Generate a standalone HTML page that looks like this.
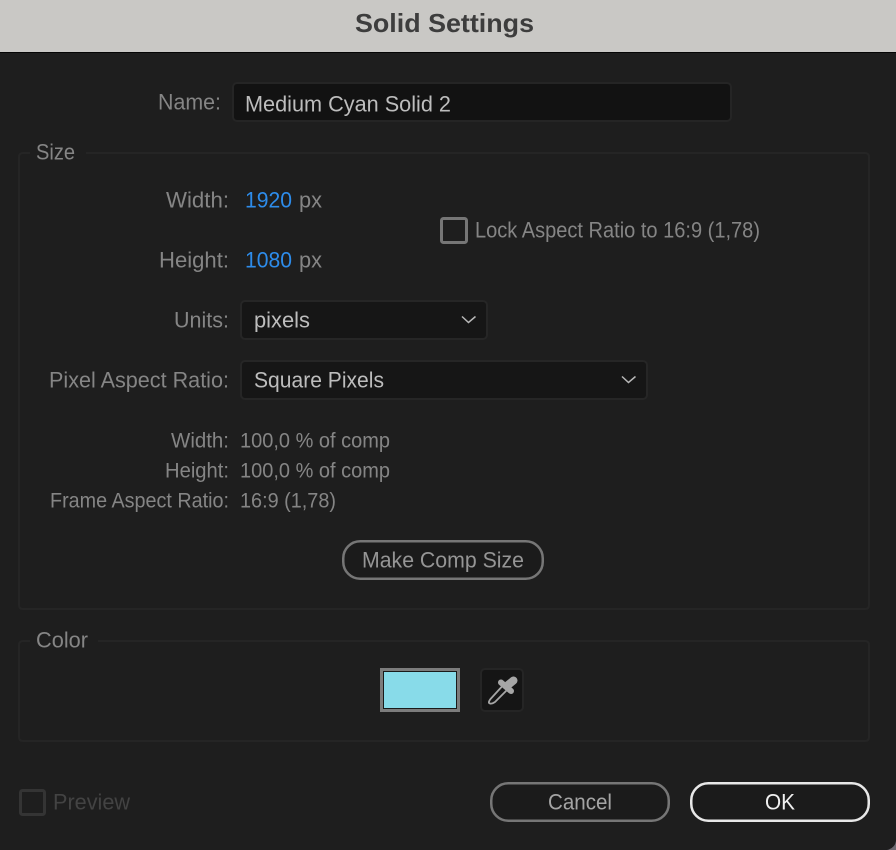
<!DOCTYPE html>
<html>
<head>
<meta charset="utf-8">
<title>Solid Settings</title>
<style>
html,body{margin:0;padding:0;background:#1e1e1e;width:896px;height:850px;overflow:hidden}
svg{display:block}
text{font-family:"Liberation Sans",sans-serif;font-size:22px;fill:#858585;transform:translateY(-.6px)}
.v{fill:#bdbdbd}
.b{fill:#2d8ceb}
</style>
</head>
<body>
<svg width="896" height="850" viewBox="0 0 896 850" xmlns="http://www.w3.org/2000/svg">
<rect width="896" height="850" fill="#1e1e1e"/>
<path d="M887 850Q895 848 896 841V850Z" fill="#6e6a72"/>
<rect width="896" height="52" fill="#c9c8c5"/>
<rect y="52" width="896" height="1" fill="#050505"/>
<text x="355" y="32" textLength="179" lengthAdjust="spacingAndGlyphs" style="font-size:26px;font-weight:bold;fill:#3d3d3d;transform:none">Solid Settings</text>

<text x="158" y="110" textLength="63" lengthAdjust="spacingAndGlyphs">Name:</text>
<rect x="233" y="83" width="498" height="38" rx="4" fill="#121212" stroke="#252525" stroke-width="2"/>
<text class="v" x="245" y="112" textLength="206" lengthAdjust="spacingAndGlyphs">Medium Cyan Solid 2</text>

<path d="M30 153H23Q19 153 19 157V605Q19 609 23 609H865Q869 609 869 605V157Q869 153 865 153H86" fill="none" stroke="#252525" stroke-width="2"/>
<text x="36" y="160" textLength="39" lengthAdjust="spacingAndGlyphs">Size</text>

<text x="166" y="208" textLength="63" lengthAdjust="spacingAndGlyphs">Width:</text>
<text class="b" x="245" y="208" textLength="47" lengthAdjust="spacingAndGlyphs">1920</text>
<text x="299" y="208" textLength="23" lengthAdjust="spacingAndGlyphs">px</text>
<text x="159" y="268" textLength="70" lengthAdjust="spacingAndGlyphs">Height:</text>
<text class="b" x="245" y="268" textLength="47" lengthAdjust="spacingAndGlyphs">1080</text>
<text x="299" y="268" textLength="23" lengthAdjust="spacingAndGlyphs">px</text>

<rect x="441.500" y="218.500" width="25" height="24" rx="2" fill="none" stroke="#767676" stroke-width="3"/>
<text x="475" y="238" textLength="285" lengthAdjust="spacingAndGlyphs">Lock Aspect Ratio to 16:9 (1,78)</text>

<text x="174" y="328" textLength="55" lengthAdjust="spacingAndGlyphs">Units:</text>
<rect x="241" y="301" width="246" height="38" rx="4" fill="#161616" stroke="#262626" stroke-width="2"/>
<text class="v" x="254" y="328" textLength="56" lengthAdjust="spacingAndGlyphs">pixels</text>
<path d="M462 316.500L468.500 322.500L475.500 316.500" fill="none" stroke="#b8b8b8" stroke-width="1.500"/>

<text x="49" y="388" textLength="180" lengthAdjust="spacingAndGlyphs">Pixel Aspect Ratio:</text>
<rect x="241" y="361" width="406" height="38" rx="4" fill="#161616" stroke="#262626" stroke-width="2"/>
<text class="v" x="254" y="388" textLength="130" lengthAdjust="spacingAndGlyphs">Square Pixels</text>
<path d="M622 376.500L628.500 382.500L635.500 376.500" fill="none" stroke="#b8b8b8" stroke-width="1.500"/>

<text x="171" y="448" textLength="58" lengthAdjust="spacingAndGlyphs" style="font-size:21px">Width:</text>
<text x="240" y="448" textLength="150" lengthAdjust="spacingAndGlyphs" style="font-size:21px">100,0 % of comp</text>
<text x="165" y="478" textLength="64" lengthAdjust="spacingAndGlyphs" style="font-size:21px">Height:</text>
<text x="240" y="478" textLength="150" lengthAdjust="spacingAndGlyphs" style="font-size:21px">100,0 % of comp</text>
<text x="50" y="508" textLength="179" lengthAdjust="spacingAndGlyphs" style="font-size:21px">Frame Aspect Ratio:</text>
<text x="240" y="508" textLength="96" lengthAdjust="spacingAndGlyphs" style="font-size:21px">16:9 (1,78)</text>

<rect x="343.250" y="541.250" width="199.500" height="37.500" rx="17" fill="#1b1b1b" stroke="#767676" stroke-width="2.500"/>
<text x="362" y="568" textLength="162" lengthAdjust="spacingAndGlyphs" style="fill:#959595">Make Comp Size</text>

<path d="M30 641H23Q19 641 19 645V737Q19 741 23 741H865Q869 741 869 737V645Q869 641 865 641H98" fill="none" stroke="#252525" stroke-width="2"/>
<text x="36" y="648" textLength="52" lengthAdjust="spacingAndGlyphs">Color</text>

<rect x="380" y="668" width="80" height="44" fill="#7c7c7c"/>
<rect x="383" y="671" width="74" height="38" fill="#1a1a1a"/>
<rect x="384" y="672" width="72" height="36" fill="#88dbe9"/>

<rect x="481" y="669" width="42" height="42" rx="4" fill="#151515" stroke="#252525" stroke-width="2"/>
<path d="M501.500 687L490.500 699Q487.500 703 490 703.500Q492 704 495 702L506 691" fill="none" stroke="#a6a6a6" stroke-width="1.800" stroke-linecap="round" stroke-linejoin="round"/>
<path d="M501 682.500L511 691" fill="none" stroke="#a6a6a6" stroke-width="6" stroke-linecap="round"/>
<path d="M508 685L513.500 680.500" fill="none" stroke="#a6a6a6" stroke-width="8" stroke-linecap="round"/>

<rect x="20.500" y="790.500" width="24" height="24" rx="2" fill="none" stroke="#343434" stroke-width="3"/>
<text x="53" y="810" textLength="77" lengthAdjust="spacingAndGlyphs" style="fill:#434343">Preview</text>

<rect x="491.250" y="783.250" width="177.500" height="37.500" rx="17" fill="#1b1b1b" stroke="#767676" stroke-width="2.500"/>
<text x="548" y="810" textLength="64" lengthAdjust="spacingAndGlyphs" style="fill:#a4a4a4">Cancel</text>
<rect x="691.250" y="783.250" width="177.500" height="37.500" rx="17" fill="#1b1b1b" stroke="#e8e8e8" stroke-width="2.500"/>
<text x="765" y="810" textLength="30" lengthAdjust="spacingAndGlyphs" style="fill:#f0f0f0">OK</text>
</svg>
</body>
</html>
